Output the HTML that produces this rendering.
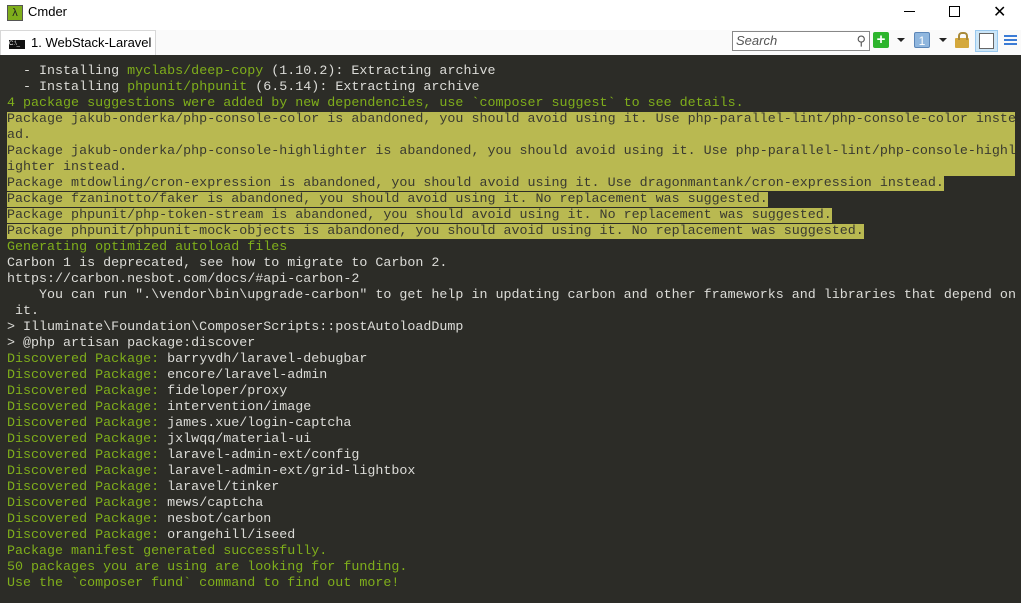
<!DOCTYPE html>
<html><head><meta charset="utf-8"><style>
body{margin:0;width:1021px;height:603px;overflow:hidden;background:#fff;font-family:"Liberation Sans","Noto Sans CJK SC",sans-serif;position:relative}
.title{position:absolute;left:0;top:0;width:1021px;height:30px;background:#fff}
.tabbar{position:absolute;left:0;top:30px;width:1021px;height:25px;background:#fafafa}
.term{position:absolute;left:0;top:55px;width:1021px;height:548px;background:#2c2c27}
.lines{position:absolute;left:7px;top:64px;font-family:"Liberation Mono",monospace;font-size:13.35px;line-height:16px;color:#dcdcd8}
.l{height:16px;white-space:pre}
.g{color:#7fae1b}
.h{background:#b9b951;color:#3a3a30}
.hf{display:block;width:1008px;background:#b9b951;color:#3a3a30;overflow:hidden}
</style></head><body>
<div class="title">
<div style="position:absolute;left:7px;top:5px;width:14px;height:14px;background:#7fae1b;border:1px solid #555;color:#222;font-size:11px;line-height:14px;text-align:center">λ</div>
<div style="position:absolute;left:28px;top:4px;font-size:13px;color:#000">Cmder</div>
<div style="position:absolute;left:904px;top:11px;width:11px;height:1px;background:#000"></div>
<div style="position:absolute;left:949px;top:6px;width:9px;height:9px;border:1px solid #000"></div>
<div style="position:absolute;left:993px;top:2px;font-size:16px;color:#000">✕</div>
</div>
<div class="tabbar">
<div style="position:absolute;left:0;top:0;width:154px;height:25px;background:#fff;border:1px solid #d8d8d8;border-bottom:none"></div>
<div style="position:absolute;left:9px;top:10px;width:16px;height:9px;background:#111;color:#fff;font-size:6px;line-height:9px">C:\_</div>
<div style="position:absolute;left:31px;top:5px;font-size:13px;color:#000">1. WebStack-Laravel</div>
<div style="position:absolute;left:732px;top:1px;width:133px;height:18px;border:1px solid #888;background:#fff;font-style:italic;font-size:13px;color:#555;line-height:18px;padding-left:3px;box-sizing:content-box">Search<span style="position:absolute;right:3px;top:0;font-style:normal;color:#555">⚲</span></div>
<div style="position:absolute;left:873px;top:2px;width:16px;height:16px;background:#2db52d;border-radius:2px;color:#fff;font-weight:bold;text-align:center;line-height:16px;font-size:15px">+</div>
<div style="position:absolute;left:897px;top:8px;border-left:4px solid transparent;border-right:4px solid transparent;border-top:4px solid #222"></div>
<div style="position:absolute;left:914px;top:2px;width:16px;height:16px;background:#8fb6de;border:1px solid #5b86b8;border-radius:2px;color:#fff;text-align:center;line-height:16px;font-size:12px;box-sizing:border-box">1</div>
<div style="position:absolute;left:939px;top:8px;border-left:4px solid transparent;border-right:4px solid transparent;border-top:4px solid #222"></div>
<div style="position:absolute;left:955px;top:8px;width:14px;height:10px;background:#d4a83c;border-radius:1px"></div>
<div style="position:absolute;left:958px;top:2px;width:6px;height:6px;border:2px solid #a88a3a;border-bottom:none;border-radius:4px 4px 0 0"></div>
<div style="position:absolute;left:975px;top:0;width:23px;height:22px;background:#cde6f7;border:1px solid #99c9ef;box-sizing:border-box"></div>
<div style="position:absolute;left:979px;top:3px;width:15px;height:16px;border:1px solid #666;background:#fff;box-sizing:border-box"></div>
<div style="position:absolute;left:1004px;top:5px;width:13px;height:2px;background:#3a7bd5;box-shadow:0 4px 0 #3a7bd5,0 8px 0 #3a7bd5"></div>
</div>
<div class="term"></div>
<div class="lines"><div class="l">  - Installing <span class="g">myclabs/deep-copy</span> (1.10.2): Extracting archive</div><div class="l">  - Installing <span class="g">phpunit/phpunit</span> (6.5.14): Extracting archive</div><div class="l g">4 package suggestions were added by new dependencies, use `composer suggest` to see details.</div><div class="l"><span class="hf">Package jakub-onderka/php-console-color is abandoned, you should avoid using it. Use php-parallel-lint/php-console-color inste</span></div><div class="l"><span class="hf">ad.</span></div><div class="l"><span class="hf">Package jakub-onderka/php-console-highlighter is abandoned, you should avoid using it. Use php-parallel-lint/php-console-highl</span></div><div class="l"><span class="hf">ighter instead.</span></div><div class="l"><span class="h">Package mtdowling/cron-expression is abandoned, you should avoid using it. Use dragonmantank/cron-expression instead.</span></div><div class="l"><span class="h">Package fzaninotto/faker is abandoned, you should avoid using it. No replacement was suggested.</span></div><div class="l"><span class="h">Package phpunit/php-token-stream is abandoned, you should avoid using it. No replacement was suggested.</span></div><div class="l"><span class="h">Package phpunit/phpunit-mock-objects is abandoned, you should avoid using it. No replacement was suggested.</span></div><div class="l g">Generating optimized autoload files</div><div class="l">Carbon 1 is deprecated, see how to migrate to Carbon 2.</div><div class="l">https://carbon.nesbot.com/docs/#api-carbon-2</div><div class="l">    You can run ".\vendor\bin\upgrade-carbon" to get help in updating carbon and other frameworks and libraries that depend on</div><div class="l"> it.</div><div class="l">&gt; Illuminate\Foundation\ComposerScripts::postAutoloadDump</div><div class="l">&gt; @php artisan package:discover</div><div class="l"><span class="g">Discovered Package:</span> barryvdh/laravel-debugbar</div><div class="l"><span class="g">Discovered Package:</span> encore/laravel-admin</div><div class="l"><span class="g">Discovered Package:</span> fideloper/proxy</div><div class="l"><span class="g">Discovered Package:</span> intervention/image</div><div class="l"><span class="g">Discovered Package:</span> james.xue/login-captcha</div><div class="l"><span class="g">Discovered Package:</span> jxlwqq/material-ui</div><div class="l"><span class="g">Discovered Package:</span> laravel-admin-ext/config</div><div class="l"><span class="g">Discovered Package:</span> laravel-admin-ext/grid-lightbox</div><div class="l"><span class="g">Discovered Package:</span> laravel/tinker</div><div class="l"><span class="g">Discovered Package:</span> mews/captcha</div><div class="l"><span class="g">Discovered Package:</span> nesbot/carbon</div><div class="l"><span class="g">Discovered Package:</span> orangehill/iseed</div><div class="l g">Package manifest generated successfully.</div><div class="l g">50 packages you are using are looking for funding.</div><div class="l g">Use the `composer fund` command to find out more!</div></div>
</body></html>
